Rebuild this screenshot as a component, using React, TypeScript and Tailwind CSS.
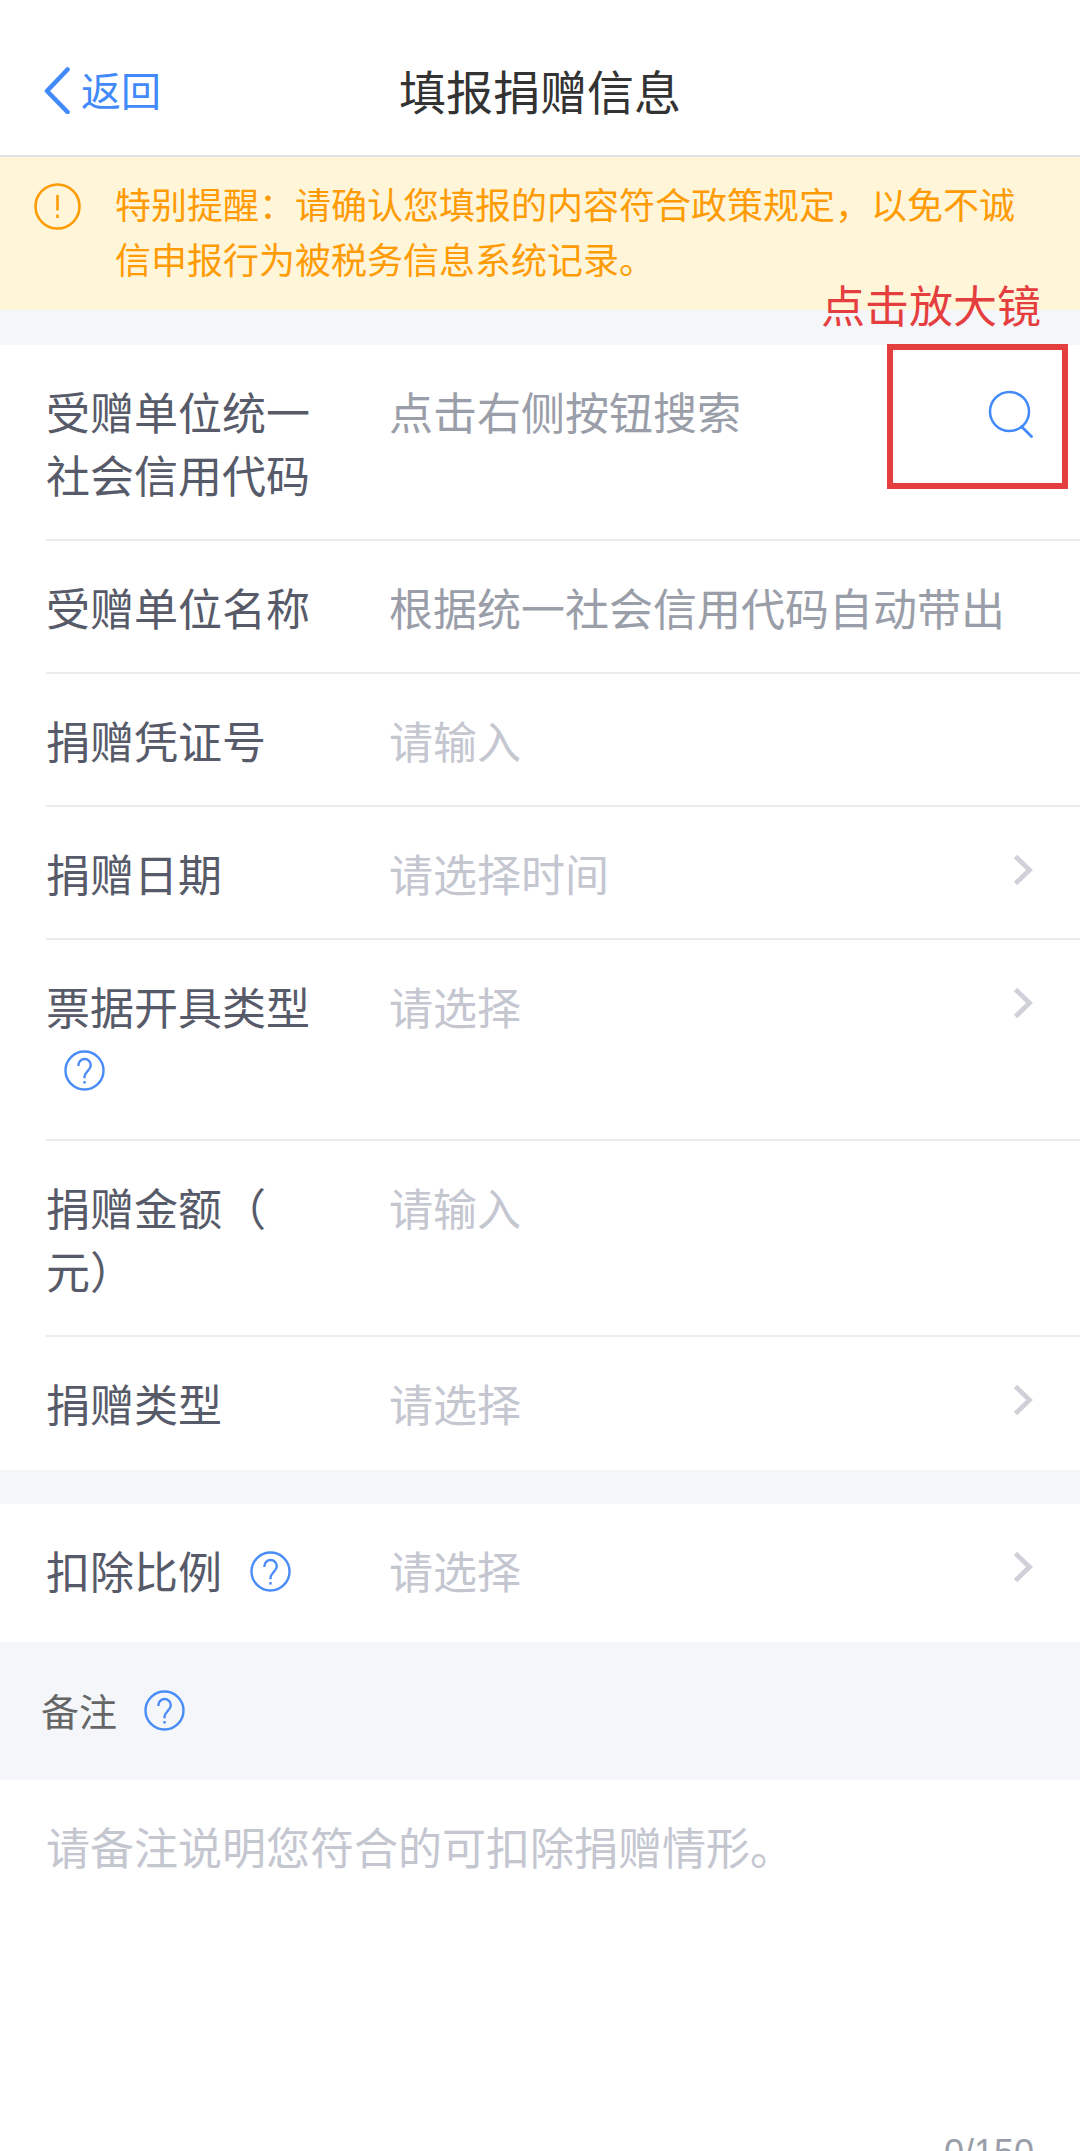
import { useState, type ReactNode } from "react";

interface RowProps {
  id: string;
  label: ReactNode;
  help?: boolean;
  arrow?: boolean;
  last?: boolean;
  children: ReactNode;
}

const MAX_REMARK = 150;

const FIELD =
  "h-[63px] min-w-0 flex-1 appearance-none bg-transparent p-0 outline-none placeholder:opacity-100";
const PENDING = "text-[#c4c6d0] placeholder:text-[#c4c6d0]";
const READONLY = "text-[#9a9ea9] placeholder:text-[#9a9ea9]";

function BackIcon() {
  return (
    <svg width="27" height="48" viewBox="0 0 27 48" fill="none" aria-hidden="true">
      <path d="M23.5 3.500 3 25l20.500 21" stroke="currentColor" strokeWidth="4.600" strokeLinecap="round" strokeLinejoin="round" />
    </svg>
  );
}

function NoticeIcon() {
  return (
    <svg className="shrink-0" width="47" height="47" viewBox="0 0 47 47" fill="none" stroke="currentColor" aria-hidden="true">
      <circle cx="23.5" cy="23.5" r="22" strokeWidth="2.6" />
      <path d="M23.5 12v15.500M23.5 31.500v3.500" strokeWidth="2.600" />
    </svg>
  );
}

function SearchIcon() {
  return (
    <svg width="46" height="50" viewBox="0 0 46 50" fill="none" stroke="currentColor" aria-hidden="true">
      <circle cx="22.5" cy="22.5" r="19.500" strokeWidth="2.500" />
      <path d="m34.500 37.500 10 10" strokeWidth="2.800" strokeLinecap="round" />
    </svg>
  );
}

function ArrowIcon() {
  return (
    <svg className="mt-[12px] shrink-0 text-[#d0d1d8]" width="20" height="32" viewBox="0 0 20 32" fill="none" aria-hidden="true">
      <path d="m2.5 2.5 14 13.5-14 13.5" stroke="currentColor" strokeWidth="4.8" />
    </svg>
  );
}

function HelpButton({ title }: { title: string }) {
  return (
    <button type="button" aria-label={title} className="-mt-[11px] ml-[18px] inline-block align-middle text-[#4a8cf7]">
      <svg width="41" height="41" viewBox="0 0 41 41" fill="none" stroke="currentColor" aria-hidden="true">
        <circle cx="20.5" cy="20.5" r="19" strokeWidth="2.4" />
        <path
          d="M14.4 16v-.8a6.2 6.2 0 0 1 12.4 0c0 2.6-1.4 4-3.2 5.9-2 2.1-3.1 3.2-3.1 5.9v1.2"
          strokeWidth="2.4"
        />
        <path d="M20.5 31v2.6" strokeWidth="2.4" />
      </svg>
    </button>
  );
}

function Row({ id, label, help, arrow, last, children }: RowProps) {
  return (
    <div
      className={`ml-[46px] flex items-start border-b-2 pt-[35px] pr-[47px] ${help ? "pb-[38px]" : "pb-[33px]"} ${
        last ? "border-transparent" : "border-[#ebecf0]"
      }`}
    >
      <div className="mr-[63px] w-[280px] shrink-0 text-[#575b69]">
        <label htmlFor={id}>{label}</label>
        {help && (
          <>
            {" "}
            <HelpButton title="说明" />
          </>
        )}
      </div>
      {children}
      {arrow && <ArrowIcon />}
    </div>
  );
}

export default function App() {
  const [remark, setRemark] = useState("");

  return (
    <div className="flex h-screen flex-col overflow-hidden bg-white font-['Noto_Sans_CJK_SC',sans-serif] text-[44px] leading-[63px]">
      <header className="grid shrink-0 grid-cols-[1fr_auto_1fr] items-center border-b-2 border-[#e2e3e8] px-11 pt-[58px] pb-[34px]">
        <button type="button" className="flex items-center gap-[10px] justify-self-start text-[40px] text-[#4289f9]">
          <BackIcon />
          返回
        </button>
        <h1 className="text-[47px] text-[#333333]">填报捐赠信息</h1>
      </header>

      <section className="flex shrink-0 gap-[34px] bg-[#fff6da] pt-[19px] pr-[50px] pb-[24px] pl-[34px] text-[36px] leading-[55px] text-[#ff9b05]">
        <div className="pt-[7px]">
          <NoticeIcon />
        </div>
        <p>特别提醒：请确认您填报的内容符合政策规定，以免不诚信申报行为被税务信息系统记录。</p>
      </section>

      <form className="shrink-0 bg-[#f4f6fa] pt-[35px]">
        <div className="relative bg-white">
          <Row id="credit-code" label="受赠单位统一社会信用代码">
            <input id="credit-code" className={`${FIELD} ${READONLY}`} placeholder="点击右侧按钮搜索" readOnly />
            <button type="button" aria-label="搜索" className="mt-[9px] text-[#4289f9]">
              <SearchIcon />
            </button>
          </Row>
          <Row id="org-name" label="受赠单位名称">
            <input id="org-name" className={`${FIELD} ${READONLY}`} placeholder="根据统一社会信用代码自动带出" readOnly />
          </Row>
          <Row id="voucher" label="捐赠凭证号">
            <input id="voucher" className={`${FIELD} ${PENDING}`} placeholder="请输入" />
          </Row>
          <Row id="date" label="捐赠日期" arrow>
            <input id="date" className={`${FIELD} ${PENDING}`} placeholder="请选择时间" readOnly />
          </Row>
          <Row id="bill-type" label="票据开具类型" help arrow>
            <select id="bill-type" className={`${FIELD} ${PENDING}`}>
              <option>请选择</option>
            </select>
          </Row>
          <Row
            id="amount"
            label={
              <>
                捐赠金额（
                <br />
                元）
              </>
            }
          >
            <input id="amount" className={`${FIELD} ${PENDING}`} placeholder="请输入" inputMode="decimal" />
          </Row>
          <Row id="donation-type" label="捐赠类型" arrow last>
            <select id="donation-type" className={`${FIELD} ${PENDING}`}>
              <option>请选择</option>
            </select>
          </Row>

          {/* Tutorial callout over the search button */}
          <div className="pointer-events-none absolute -top-[1px] right-3 h-[145px] w-[181px] border-6 border-[#e53e3e]" />
          <p className="pointer-events-none absolute -top-[63px] right-[39px] leading-none text-[#e53e3e]">点击放大镜</p>
        </div>

        <div className="mt-[34px] bg-white">
          <Row id="ratio" label="扣除比例" help arrow last>
            <select id="ratio" className={`${FIELD} ${PENDING}`}>
              <option>请选择</option>
            </select>
          </Row>
        </div>

        <div className="px-[41px] pt-[36px] pb-[39px] text-[38px] text-[#666666]">
          <label htmlFor="remark">备注</label> <HelpButton title="备注说明" />
        </div>

        <div className="bg-white px-[46px] pt-[35px]">
          <textarea
            id="remark"
            className={`block h-[310px] w-full resize-none bg-transparent outline-none placeholder:opacity-100 ${PENDING}`}
            placeholder="请备注说明您符合的可扣除捐赠情形。"
            maxLength={MAX_REMARK}
            value={remark}
            onChange={(e) => setRemark(e.target.value)}
          />
          <p className="text-right font-['Liberation_Sans',sans-serif] text-[36px] leading-[55px] text-[#9a9ea9]">
            {remark.length}/{MAX_REMARK}
          </p>
        </div>
      </form>
    </div>
  );
}
